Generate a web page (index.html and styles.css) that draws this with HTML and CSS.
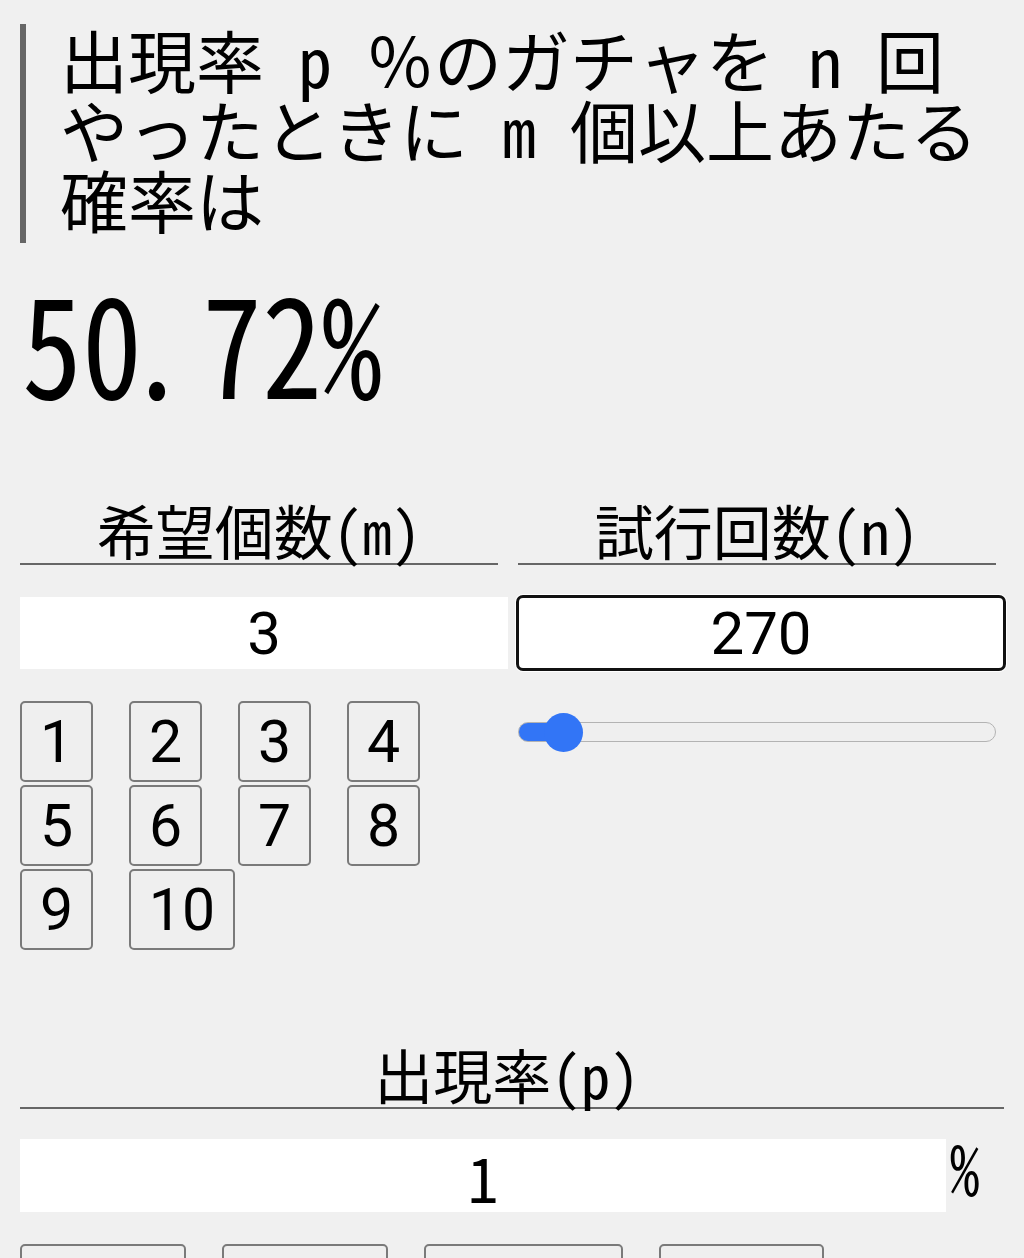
FILE: index.html
```html
<!DOCTYPE html>
<html lang="ja">
<head>
<meta charset="utf-8">
<title>ガチャ確率計算</title>
<link rel="stylesheet" href="styles.css">
</head>
<body>
<div class="page">
  <div class="question"><div class="qtext">出現率 p ％のガチャを n 回やったときに m 個以上あたる確率は</div></div>
  <div class="result">50<span class="dot">.</span>72%</div>
  <div class="cols">
    <div class="col">
      <div class="label">希望個数(m)</div>
      <input class="num" type="text" value="3">
      <div class="btns">
        <button class="nb">1</button><button class="nb">2</button><button class="nb">3</button><button class="nb">4</button>
        <button class="nb">5</button><button class="nb">6</button><button class="nb">7</button><button class="nb">8</button>
        <button class="nb">9</button><button class="nb">10</button>
      </div>
    </div>
    <div class="col">
      <div class="label">試行回数(n)</div>
      <input class="num focus" type="text" value="270">
      <input class="slider" type="range" min="0" max="4540" value="262">
    </div>
  </div>
  <div class="label wide">出現率(p)</div>
  <div class="prow">
    <input class="num pin" type="text" value="1"><span class="pct">%</span>
  </div>
  <div class="pbtns">
    <button class="pb w1">0.1%</button><button class="pb w2">0.5%</button><button class="pb w3">1.25%</button><button class="pb w4">3%</button>
  </div>
</div>
</body>
</html>
```
FILE: styles.css
```css
html, body {
  margin: 0;
  padding: 0;
  background: #f0f0f0;
}
body {
  font-family: "Noto Sans Mono CJK JP", "Noto Sans CJK JP", sans-serif;
  color: #000;
  height: 1258px;
  overflow: hidden;
}
.page {
  padding: 28px 20px 0 20px;
}
.question {
  border-left: 6px solid #666;
  padding: 0 0 5px 34px;
  width: 924px;
}
.qtext {
  font-size: 68px;
  line-height: 70px;
  margin-top: -4px;
  padding-bottom: 4px;
}
.result {
  margin-top: 27px;
  font-size: 120px;
  line-height: 140px;
  height: 140px;
  padding-left: 2px;
  transform: scaleY(1.16);
  transform-origin: 50% 80px;
}
.dot {
  margin-left: -15px;
  margin-right: 15px;
}
.cols {
  display: flex;
  gap: 20px;
  margin-top: 86px;
}
.col {
  width: 478px;
}
.label {
  font-size: 59px;
  line-height: 67px;
  text-align: center;
  border-bottom: 2px solid #666;
}
.num {
  box-sizing: border-box;
  display: block;
  width: 488px;
  height: 72px;
  margin-top: 32px;
  border: none;
  background: #fff;
  font-family: Roboto, sans-serif;
  font-size: 60px;
  text-align: center;
  padding: 0;
  color: #000;
  outline: none;
}
.num.focus {
  margin-left: -2px;
  margin-top: 30px;
  width: 490px;
  height: 76px;
  border: 3px solid #111;
  border-radius: 7px;
  box-shadow: 0 0 0 1px #fff;
}
.btns {
  margin-top: 32px;
  display: flex;
  flex-wrap: wrap;
  column-gap: 36px;
  row-gap: 3px;
  width: 440px;
}
.nb {
  box-sizing: border-box;
  width: 73px;
  height: 81px;
  border: 2px solid #7a7a7a;
  border-radius: 5px;
  background: #efefef;
  font-family: Roboto, sans-serif;
  font-size: 59px;
  line-height: 1;
  color: #000;
  padding: 0;
}
.nb:last-child {
  width: 106px;
}
.slider {
  -webkit-appearance: none;
  appearance: none;
  display: block;
  width: 478px;
  height: 40px;
  margin: 41px 0 0 0;
  background: transparent;
}
.slider::-webkit-slider-runnable-track {
  height: 20px;
  box-sizing: border-box;
  border: 1px solid #b3b3b3;
  border-radius: 10px;
  background: linear-gradient(to right, #3275f6 0 46px, #efefef 46px);
}
.slider::-webkit-slider-thumb {
  -webkit-appearance: none;
  width: 39px;
  height: 39px;
  border-radius: 50%;
  background: #3275f6;
  border: none;
  margin-top: -10.5px;
}
.label.wide {
  margin-top: 90px;
  padding-right: 10px;
}
.prow {
  display: flex;
  align-items: flex-start;
  gap: 4px;
  margin-top: 30px;
}
.pin {
  width: 926px;
  height: 73px;
  margin-top: 0;
  font-family: "Noto Sans Mono CJK JP", "Noto Sans CJK JP", sans-serif;
  font-size: 62px;
}
.pct {
  font-size: 59px;
  line-height: 51px;
  display: inline-block;
  transform: scaleY(1.2);
  transform-origin: 50% 20px;
}
.pbtns {
  margin-top: 32px;
  display: flex;
  gap: 36px;
}
.pb {
  box-sizing: border-box;
  height: 81px;
  border: 2px solid #7a7a7a;
  border-radius: 5px;
  background: #efefef;
  font-family: Roboto, sans-serif;
  font-size: 59px;
  padding: 0;
}
.w1 { width: 166px; }
.w2 { width: 166px; }
.w3 { width: 199px; }
.w4 { width: 165px; }
```
